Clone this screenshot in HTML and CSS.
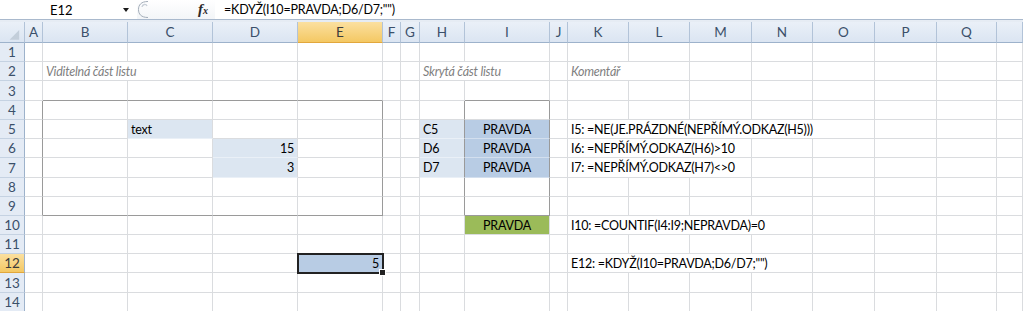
FILE: index.html
```html
<!DOCTYPE html>
<html lang="cs">
<head>
<meta charset="utf-8">
<title>Excel</title>
<link rel="stylesheet" href="styles.css">
</head>
<body>
<div class="fbar">
  <div class="namebox"><span class="ref">E12</span><span class="arrow"></span></div>
  <div class="fxzone">
    <svg class="grip" width="12" height="19" viewBox="0 0 12 19"><path d="M11 1.5 C4 1.5 1.5 5 1.5 9.5 C1.5 14 4 17.5 11 17.5" fill="none" stroke="#a3adb9" stroke-width="1"/><path d="M5 7 C5.5 4 9 3.5 10 6" fill="none" stroke="#c9d0d8" stroke-width="1.4"/></svg>
    <span class="fx"><i>f</i><small>x</small></span>
  </div>
  <div class="formula">=KDYŽ(I10=PRAVDA;D6/D7;"")</div>
</div>
<div class="gap"></div>
<div class="sheet">
  <div class="hd corner"><svg width="25" height="21" viewBox="0 0 25 21"><path d="M20 8 L20 18 L10 18 Z" fill="#c3ceda"/></svg></div>
  <div class="hd">A</div><div class="hd">B</div><div class="hd">C</div><div class="hd">D</div><div class="hd selh">E</div><div class="hd">F</div><div class="hd">G</div><div class="hd">H</div><div class="hd">I</div><div class="hd">J</div><div class="hd">K</div><div class="hd">L</div><div class="hd">M</div><div class="hd">N</div><div class="hd">O</div><div class="hd">P</div><div class="hd">Q</div><div class="hd"></div>

  <div class="rh">1</div>
  <div class="c"></div><div class="c"></div><div class="c"></div><div class="c"></div><div class="c"></div><div class="c"></div><div class="c"></div><div class="c"></div><div class="c"></div><div class="c"></div><div class="c"></div><div class="c"></div><div class="c"></div><div class="c"></div><div class="c"></div><div class="c"></div><div class="c"></div><div class="c"></div>

  <div class="rh">2</div>
  <div class="c"></div><div class="c note span2">Viditelná část listu</div><div class="c"></div><div class="c"></div><div class="c"></div><div class="c"></div><div class="c note span2">Skrytá část listu</div><div class="c"></div><div class="c note span2">Komentář</div><div class="c"></div><div class="c"></div><div class="c"></div><div class="c"></div><div class="c"></div><div class="c"></div>

  <div class="rh">3</div>
  <div class="c"></div><div class="c bb"></div><div class="c bb"></div><div class="c bb"></div><div class="c bb"></div><div class="c"></div><div class="c"></div><div class="c"></div><div class="c bb"></div><div class="c"></div><div class="c"></div><div class="c"></div><div class="c"></div><div class="c"></div><div class="c"></div><div class="c"></div><div class="c"></div><div class="c"></div>

  <div class="rh">4</div>
  <div class="c br"></div><div class="c"></div><div class="c"></div><div class="c"></div><div class="c br"></div><div class="c"></div><div class="c"></div><div class="c br"></div><div class="c br"></div><div class="c"></div><div class="c"></div><div class="c"></div><div class="c"></div><div class="c"></div><div class="c"></div><div class="c"></div><div class="c"></div><div class="c"></div>

  <div class="rh">5</div>
  <div class="c br"></div><div class="c"></div><div class="c f1">text</div><div class="c"></div><div class="c br"></div><div class="c"></div><div class="c"></div><div class="c f1 br">C5</div><div class="c f2 br center">PRAVDA</div><div class="c"></div><div class="c span5">I5: =NE(JE.PRÁZDNÉ(NEPŘÍMÝ.ODKAZ(H5)))</div><div class="c"></div><div class="c"></div><div class="c"></div>

  <div class="rh">6</div>
  <div class="c br"></div><div class="c"></div><div class="c"></div><div class="c f1 num">15</div><div class="c br"></div><div class="c"></div><div class="c"></div><div class="c f1 br">D6</div><div class="c f2 br center">PRAVDA</div><div class="c"></div><div class="c span3">I6: =NEPŘÍMÝ.ODKAZ(H6)&gt;10</div><div class="c"></div><div class="c"></div><div class="c"></div><div class="c"></div><div class="c"></div>

  <div class="rh">7</div>
  <div class="c br"></div><div class="c"></div><div class="c"></div><div class="c f1 num">3</div><div class="c br"></div><div class="c"></div><div class="c"></div><div class="c f1 br">D7</div><div class="c f2 br center">PRAVDA</div><div class="c"></div><div class="c span3">I7: =NEPŘÍMÝ.ODKAZ(H7)&lt;&gt;0</div><div class="c"></div><div class="c"></div><div class="c"></div><div class="c"></div><div class="c"></div>

  <div class="rh">8</div>
  <div class="c br"></div><div class="c"></div><div class="c"></div><div class="c"></div><div class="c br"></div><div class="c"></div><div class="c"></div><div class="c br"></div><div class="c br"></div><div class="c"></div><div class="c"></div><div class="c"></div><div class="c"></div><div class="c"></div><div class="c"></div><div class="c"></div><div class="c"></div><div class="c"></div>

  <div class="rh">9</div>
  <div class="c br"></div><div class="c bb"></div><div class="c bb"></div><div class="c bb"></div><div class="c bb br"></div><div class="c"></div><div class="c"></div><div class="c br"></div><div class="c bb br"></div><div class="c"></div><div class="c"></div><div class="c"></div><div class="c"></div><div class="c"></div><div class="c"></div><div class="c"></div><div class="c"></div><div class="c"></div>

  <div class="rh">10</div>
  <div class="c"></div><div class="c"></div><div class="c"></div><div class="c"></div><div class="c"></div><div class="c"></div><div class="c"></div><div class="c"></div><div class="c green center">PRAVDA</div><div class="c"></div><div class="c span4">I10: =COUNTIF(I4:I9;NEPRAVDA)=0</div><div class="c"></div><div class="c"></div><div class="c"></div><div class="c"></div>

  <div class="rh">11</div>
  <div class="c"></div><div class="c"></div><div class="c"></div><div class="c"></div><div class="c"></div><div class="c"></div><div class="c"></div><div class="c"></div><div class="c"></div><div class="c"></div><div class="c"></div><div class="c"></div><div class="c"></div><div class="c"></div><div class="c"></div><div class="c"></div><div class="c"></div><div class="c"></div>

  <div class="rh selh">12</div>
  <div class="c"></div><div class="c"></div><div class="c"></div><div class="c"></div><div class="c sel num">5</div><div class="c"></div><div class="c"></div><div class="c"></div><div class="c"></div><div class="c"></div><div class="c span4">E12: =KDYŽ(I10=PRAVDA;D6/D7;"")</div><div class="c"></div><div class="c"></div><div class="c"></div><div class="c"></div>

  <div class="rh">13</div>
  <div class="c"></div><div class="c"></div><div class="c"></div><div class="c"></div><div class="c"></div><div class="c"></div><div class="c"></div><div class="c"></div><div class="c"></div><div class="c"></div><div class="c"></div><div class="c"></div><div class="c"></div><div class="c"></div><div class="c"></div><div class="c"></div><div class="c"></div><div class="c"></div>

  <div class="rh">14</div>
  <div class="c"></div><div class="c"></div><div class="c"></div><div class="c"></div><div class="c"></div><div class="c"></div><div class="c"></div><div class="c"></div><div class="c"></div><div class="c"></div><div class="c"></div><div class="c"></div><div class="c"></div><div class="c"></div><div class="c"></div><div class="c"></div><div class="c"></div><div class="c"></div>
</div>
</body>
</html>
```

FILE: styles.css
```css
html, body {
  margin: 0;
  padding: 0;
}
body {
  width: 1023px;
  height: 311px;
  overflow: hidden;
  background: #fff;
  font-family: Lato, "Liberation Sans", sans-serif;
  font-size: 14px;
  color: #000;
}

/* formula bar */
.fbar {
  display: flex;
  align-items: center;
  height: 19px;
  border-bottom: 1px solid #a9b9cd;
  background: #fff;
}
.namebox {
  width: 137px;
  box-sizing: border-box;
  display: flex;
  align-items: center;
  padding-left: 50px;
  padding-right: 8px;
  font-size: 13px;
}
.namebox .arrow {
  margin-left: auto;
  width: 0;
  height: 0;
  border-left: 3.5px solid transparent;
  border-right: 3.5px solid transparent;
  border-top: 4px solid #1a1a1a;
}
.fxzone {
  width: 78px;
  height: 19px;
  display: flex;
  align-items: center;
  background: linear-gradient(#ffffff, #f3f5f8);
}
.grip {
  display: block;
  flex: none;
}
.fx {
  margin-left: auto;
  margin-right: 7px;
  font-family: "Liberation Serif", serif;
  font-weight: bold;
  color: #2b2b2b;
  font-size: 15px;
  line-height: 1;
}
.fx small {
  font-size: 10px;
  font-style: italic;
}
.formula {
  padding-left: 9px;
  white-space: nowrap;
  font-size: 12.5px;
  letter-spacing: -0.2px;
}
.gap {
  height: 2px;
  background: #e6ecf4;
}

/* sheet */
.sheet {
  display: grid;
  grid-template-columns: 25px 18px 85px 85px 85px 85px 18px 19px 45px 85px 18px 61px 61px 62px 61px 62px 62px 60px 26px;
  grid-template-rows: 21px 19px 19px 20px 19px 19px 19px 20px 19px 19px 19px 19px 19px 20px 19px;
}
.hd {
  box-sizing: border-box;
  display: flex;
  align-items: center;
  justify-content: center;
  background: linear-gradient(#eaf0f8, #dbe5f2);
  border-right: 1px solid #b2c3d8;
  border-bottom: 1px solid #9db2cb;
  color: #3b506a;
  font-size: 13.5px;
}
.corner {
  align-items: stretch;
  justify-content: stretch;
}
.rh {
  box-sizing: border-box;
  display: flex;
  align-items: center;
  justify-content: center;
  background: #e4ebf5;
  border-right: 1px solid #9db2cb;
  border-bottom: 1px solid #c5d2e2;
  color: #3b506a;
  font-size: 13.5px;
}
.hd.selh, .rh.selh {
  background: linear-gradient(#fbe0a0, #f4c863);
  border-bottom-color: #e2a73c;
  color: #3b3b3b;
}
.c {
  box-sizing: border-box;
  display: flex;
  align-items: center;
  padding: 0 3px;
  border-right: 1px solid #dadcdf;
  border-bottom: 1px solid #dadcdf;
  white-space: nowrap;
  overflow: visible;
  font-size: 12.5px;
  letter-spacing: -0.25px;
}
.span2 { grid-column: span 2; }
.span3 { grid-column: span 3; }
.span4 { grid-column: span 4; }
.span5 { grid-column: span 5; }

.note {
  font-style: italic;
  color: #7f7f7f;
}
.num { justify-content: flex-end; }
.center { justify-content: center; }

.f1 {
  background: #dce6f1;
  border-bottom-color: #eaf0f7;
}
.f2 {
  background: #b8cce4;
  border-bottom-color: #d3dfee;
}
.green {
  background: #9bbb59;
}
.bb { border-bottom-color: #9a9a9a; }
.br { border-right-color: #9a9a9a; }

.sel {
  position: relative;
  z-index: 2;
  background: #b8cce4;
  outline: 2px solid #222;
  outline-offset: -1px;
}
.sel::after {
  content: "";
  position: absolute;
  right: -4px;
  bottom: -4px;
  width: 5px;
  height: 5px;
  background: #222;
  border: 1px solid #fff;
}
```
